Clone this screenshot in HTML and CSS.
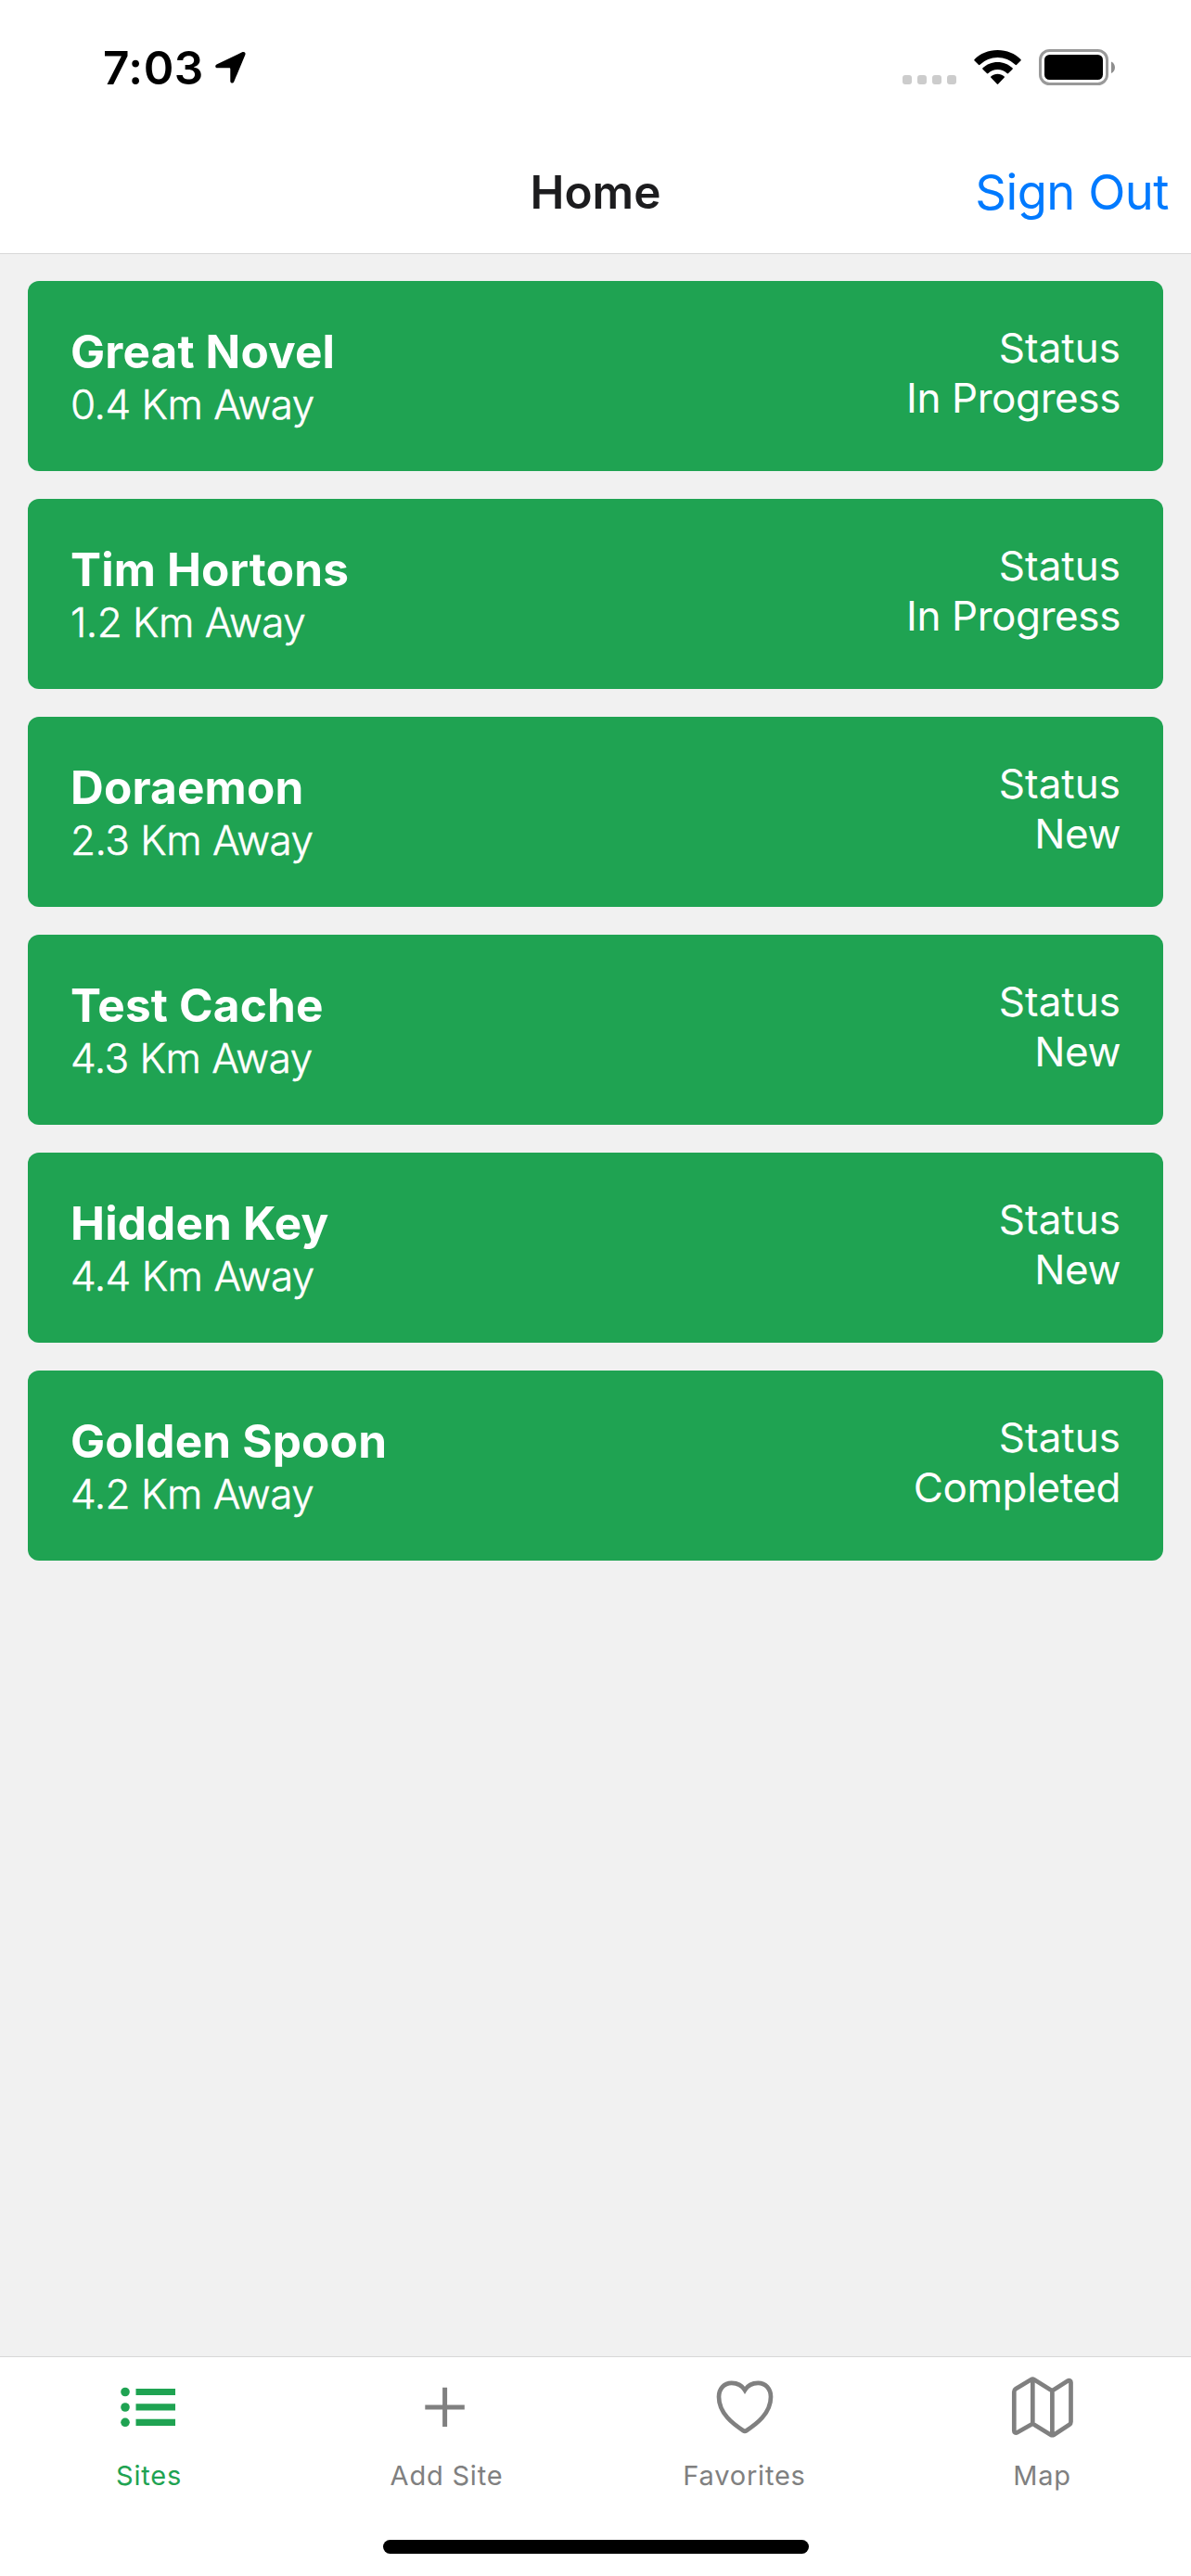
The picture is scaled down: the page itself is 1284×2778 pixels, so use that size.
FILE: index.html
```
<!DOCTYPE html>
<html lang="en">
<head>
<meta charset="utf-8">
<title>Home</title>
<link rel="stylesheet" href="styles.css">
</head>
<body>
<div class="screen">
  <header class="header">
    <div class="status-bar">
      <div class="clock">
        <span class="time">7:03</span>
        <svg class="location" width="34" height="36" viewBox="0 0 34 36"><path d="M2 14.2 29 1.3c2.400-1.100 4.300.6 3.300 3L20.200 33.200c-.8 2-3.900 1.500-3.900-.8V19.500c0-.9-.3-1.200-1.200-1.200H2.300C-.2 18.300-.6 15.300 2 14.200Z"/></svg>
      </div>
      <div class="indicators">
        <div class="signal"><i class="dot"></i><i class="dot"></i><i class="dot"></i><i class="dot"></i></div>
        <svg class="wifi" width="51" height="38" viewBox="0 0 51 38"><path d="M25.500 0C35.500 0 44.200 3.800 50.400 9.900c.5.500.5 1 0 1.500l-4.300 4.400c-.5.500-1 .5-1.500 0A27.400 27.400 0 0 0 6.400 15.800c-.5.500-1 .5-1.500 0L.6 11.400c-.5-.5-.5-1 0-1.500C6.800 3.800 15.500 0 25.500 0Z"/><path d="M25.500 13c6.200 0 11.800 2.400 16 6.300.5.500.5 1 0 1.500L37.100 25c-.5.500-1 .5-1.500 0a14.700 14.700 0 0 0-20.200 0c-.5.500-1 .5-1.500 0l-4.400-4.200c-.5-.5-.5-1 0-1.500 4.200-3.900 9.800-6.300 16-6.300Z"/><path d="M25.500 25.800c2.700 0 5.100.9 7 2.500.6.500.6 1 .1 1.500l-6.400 6.700c-.5.500-.9.500-1.400 0l-6.400-6.700c-.5-.5-.5-1 .1-1.500 1.900-1.600 4.300-2.500 7-2.500Z"/></svg>
        <svg class="battery" width="83" height="40" viewBox="0 0 83 40"><rect x="1.500" y="1.500" width="72" height="36" rx="10" fill="none" stroke="#999" stroke-width="3"/><rect x="6" y="6" width="63" height="27" rx="5.500"/><path d="M78 13.500v12.500c2.500-1 4-3.400 4-6.200s-1.500-5.300-4-6.300Z" fill="#8e8e8e"/></svg>
      </div>
    </div>
    <nav class="nav-bar">
      <h1 class="nav-title">Home</h1>
      <a class="sign-out">Sign Out</a>
    </nav>
  </header>

  <main class="sites">
    <article class="card">
      <div class="site"><h2 class="name">Great Novel</h2><p class="distance">0.4 Km Away</p></div>
      <div class="status"><p class="label">Status</p><p class="value">In Progress</p></div>
    </article>
    <article class="card">
      <div class="site"><h2 class="name">Tim Hortons</h2><p class="distance">1.2 Km Away</p></div>
      <div class="status"><p class="label">Status</p><p class="value">In Progress</p></div>
    </article>
    <article class="card">
      <div class="site"><h2 class="name">Doraemon</h2><p class="distance">2.3 Km Away</p></div>
      <div class="status"><p class="label">Status</p><p class="value">New</p></div>
    </article>
    <article class="card">
      <div class="site"><h2 class="name">Test Cache</h2><p class="distance">4.3 Km Away</p></div>
      <div class="status"><p class="label">Status</p><p class="value">New</p></div>
    </article>
    <article class="card">
      <div class="site"><h2 class="name">Hidden Key</h2><p class="distance">4.4 Km Away</p></div>
      <div class="status"><p class="label">Status</p><p class="value">New</p></div>
    </article>
    <article class="card">
      <div class="site"><h2 class="name">Golden Spoon</h2><p class="distance">4.2 Km Away</p></div>
      <div class="status"><p class="label">Status</p><p class="value">Completed</p></div>
    </article>
  </main>

  <footer class="footer">
    <div class="tabs">
      <a class="tab active">
        <svg class="icon" viewBox="0 0 72 72" fill="currentColor"><circle cx="10" cy="19.500" r="4.800"/><circle cx="10" cy="36" r="4.800"/><circle cx="10" cy="52.300" r="4.800"/><path d="M21.500 16H64v7H21.500zM21.500 32.300H64v7.200H21.500zM21.500 48.800H64V56H21.500z"/></svg>
        <span class="tab-label">Sites</span>
      </a>
      <a class="tab">
        <svg class="icon" viewBox="0 0 72 72" fill="none" stroke="currentColor" stroke-width="5"><path d="M33.600 14.800V57M12.300 36h42.500"/></svg>
        <span class="tab-label">Add Site</span>
      </a>
      <a class="tab">
        <svg class="icon" viewBox="0 0 72 72" fill="none" stroke="currentColor" stroke-width="4.700"><path d="M36 17.500C33.200 12.800 28 9.800 21.800 9.800 13.500 9.800 8 16.300 8 24.800 8 43 24 54.500 34.300 61.200c1.200.8 2.200.8 3.400 0C48 54.500 64 43 64 24.800 64 16.300 58.500 9.800 50.200 9.800 44 9.800 38.800 12.800 36 17.500Z"/></svg>
        <span class="tab-label">Favorites</span>
      </a>
      <a class="tab">
        <svg class="icon" viewBox="0 0 72 72" fill="none" stroke="currentColor" stroke-width="4.700" stroke-linejoin="round"><path d="M5.300 61.500V19.200c0-1.300.5-2.200 1.600-2.900L23.500 6.200c1.200-.7 2.300-.7 3.500 0L44.600 17.200c1.200.7 2.100.7 3.300 0L63.200 7.600c1.600-1 3.300-.2 3.300 1.700v42.500c0 1.300-.5 2.200-1.600 2.900L48.200 65.700c-1.200.7-2.300.7-3.500 0L26.900 54.700c-1.200-.7-2.100-.7-3.300 0L8.600 63.200c-1.600 1-3.300.2-3.300-1.700ZM25.300 6.500v47.500M46.400 17.500v47.500"/></svg>
        <span class="tab-label">Map</span>
      </a>
    </div>
    <div class="home-indicator"></div>
  </footer>
</div>
</body>
</html>
```
FILE: styles.css
```
* { box-sizing: border-box; }

body, h1, h2, p { margin: 0; }

body {
  font-family: Inter, "Liberation Sans", sans-serif;
  background: #f1f1f1;
}

svg { display: block; flex: none; }

.screen {
  display: flex;
  flex-direction: column;
  width: 1284px;
  height: 2778px;
}

.header {
  height: 274px;
  background: #fff;
  border-bottom: 1px solid #d8d8d8;
}

.status-bar {
  display: flex;
  justify-content: space-between;
  align-items: flex-start;
  height: 132px;
  padding: 43px 81px 0 111px;
}

.clock {
  display: flex;
  align-items: flex-start;
}

.time {
  width: 121px;
  font-size: 49.5px;
  font-weight: 600;
  line-height: 60px;
  letter-spacing: 0.5px;
}

.location { margin-top: 12px; }

.indicators {
  display: flex;
  padding-top: 10px;
}

.signal {
  display: flex;
  gap: 6px;
  margin: 28px 19px 0 0;
}

.dot {
  width: 10px;
  height: 10px;
  border-radius: 3px;
  background: #ccc;
}

.wifi { margin: 1px 19px 0 0; }

.nav-bar {
  display: grid;
  grid-template-columns: 1fr auto 1fr;
  padding: 45px 24px 0;
  line-height: 60px;
}

.nav-title {
  grid-column: 2;
  font-size: 49.5px;
  font-weight: 600;
  color: #1c1c1e;
}

.sign-out {
  justify-self: end;
  font-size: 52.5px;
  letter-spacing: -0.5px;
  color: #007aff;
}

.sites {
  flex: 1;
  display: flex;
  flex-direction: column;
  gap: 30px;
  padding: 29px 30px;
}

.card {
  display: flex;
  justify-content: space-between;
  height: 205px;
  padding: 45px 46px 0;
  border-radius: 12px;
  background: #1fa352;
  color: #fff;
  font-size: 44px;
  line-height: 54px;
}

.site { padding-top: 1px; }

.name {
  font-size: 49.5px;
  font-weight: 700;
  line-height: 60px;
  letter-spacing: 0.15px;
}

.distance {
  font-weight: 300;
  letter-spacing: -0.5px;
  -webkit-text-stroke: 0.5px #fff;
}

.status { text-align: right; }

.value { letter-spacing: -0.4px; }

.footer {
  height: 237px;
  background: #fff;
  border-top: 1px solid #d8d8d8;
}

.tabs {
  display: grid;
  grid-template-columns: repeat(4, 1fr);
  height: 197px;
  padding-top: 18px;
}

.tab {
  display: flex;
  flex-direction: column;
  align-items: center;
  gap: 20px;
  color: #808080;
}

.tab.active { color: #1fa352; }

.icon {
  width: 72px;
  height: 72px;
}

.tab-label {
  font-size: 29px;
  line-height: 35px;
  letter-spacing: 0.8px;
}

.home-indicator {
  width: 459px;
  height: 15px;
  margin: 0 auto;
  border-radius: 8px;
  background: #000;
}
```
